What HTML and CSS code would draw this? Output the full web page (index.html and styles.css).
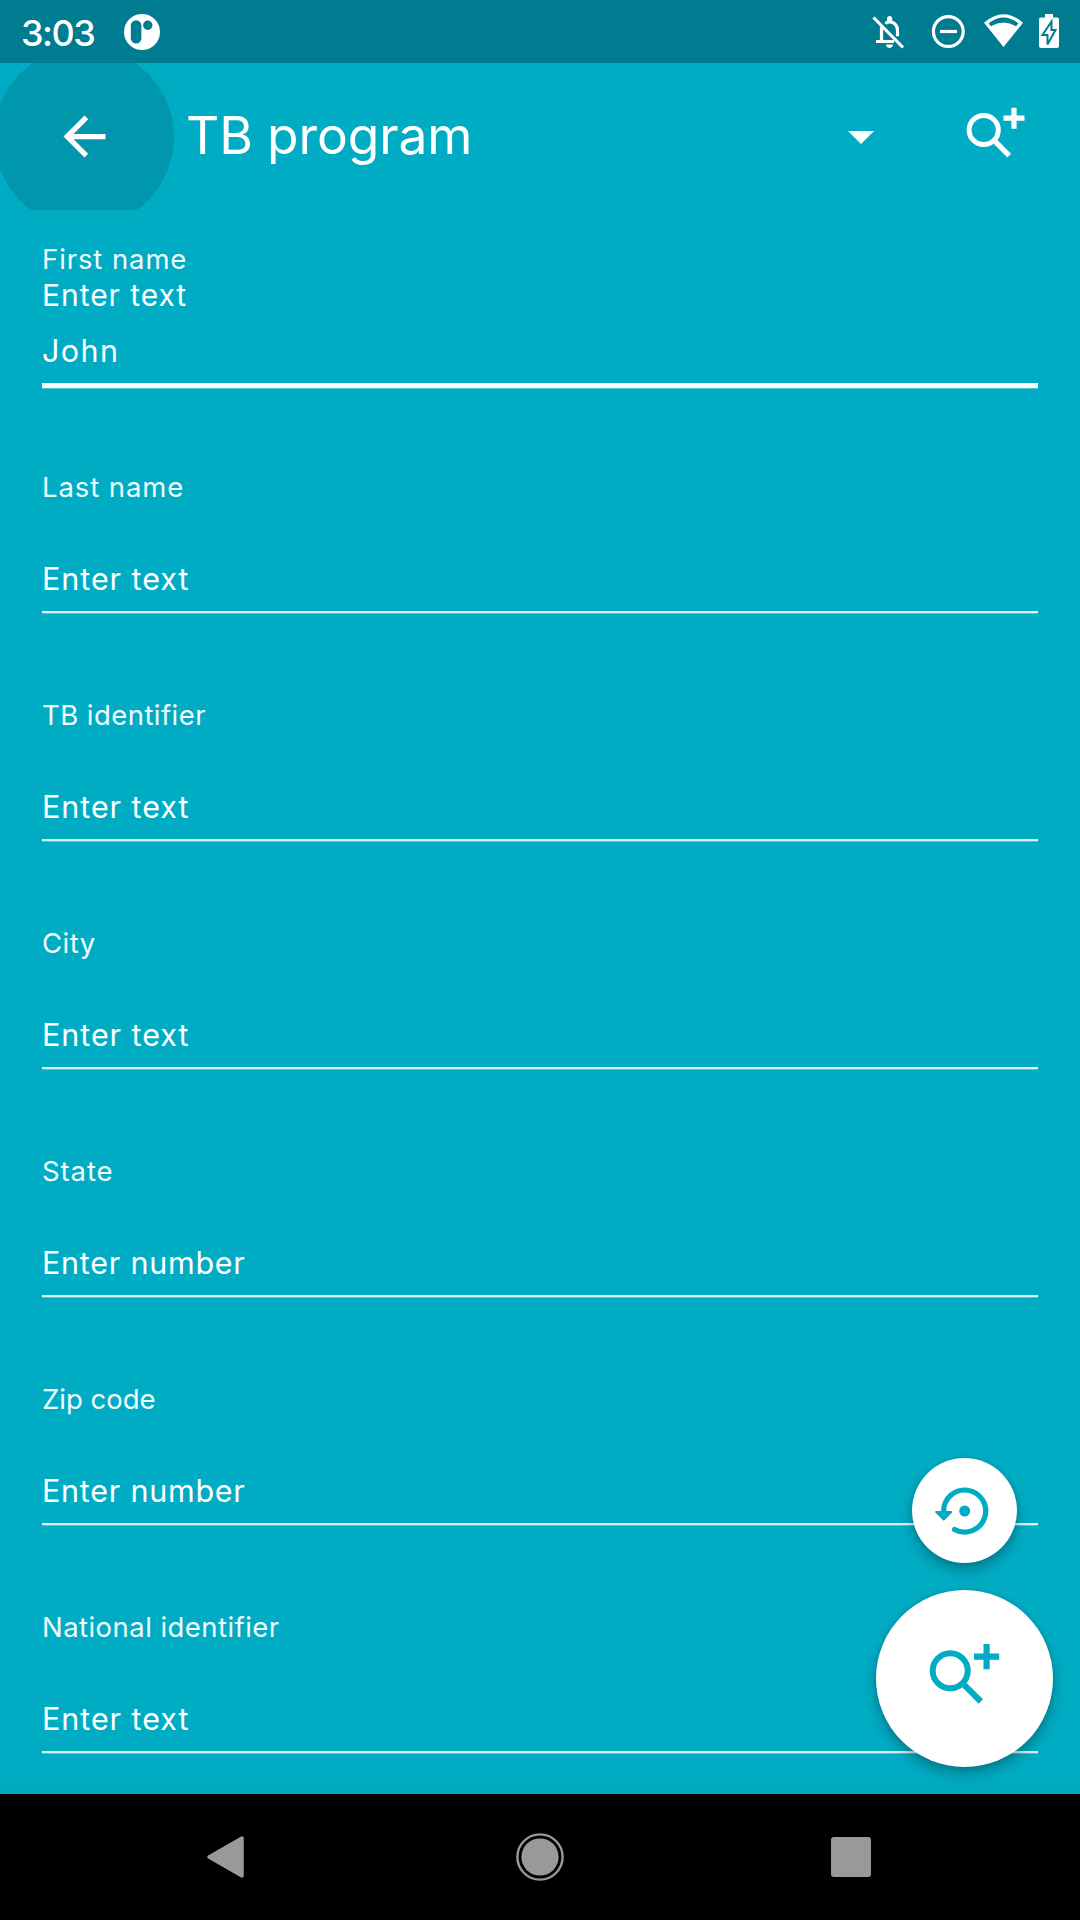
FILE: index.html
```html
<!DOCTYPE html>
<html lang="en">
<head>
<meta charset="utf-8">
<title>TB program</title>
<link rel="stylesheet" href="styles.css">
</head>
<body>
<svg class="defs" width="0" height="0" aria-hidden="true">
  <symbol id="search-plus" viewBox="0 0 60 52">
    <circle cx="17.7" cy="24" r="14.6" fill="none" stroke="currentColor" stroke-width="5"/>
    <path d="M29.3 35.7 43.2 49.6" stroke="currentColor" stroke-width="5.2"/>
    <path d="M37.5 12.2h21M48 1.7v21" stroke="currentColor" stroke-width="5.2"/>
  </symbol>
</svg>
<div class="screen">
  <header class="status">
    <span class="clock">3:03</span>
    <svg class="app-logo" width="38" height="38" viewBox="0 0 38 38">
      <circle cx="19" cy="19" r="18" fill="#fff"/>
      <rect x="7.8" y="7.3" width="10.6" height="23.2" rx="5.3" fill="#007c91"/>
      <circle cx="24.8" cy="12.3" r="4.7" fill="#007c91"/>
    </svg>
    <svg class="status-icons" width="190" height="40" viewBox="870 12 190 40">
      <g fill="none" stroke="#fff" stroke-width="3.2">
        <path d="M873.5 17.5 903 47.5M881.5 27v14M876 41.5h18M885.5 23.8c1-1.2 2.5-1.9 4-1.9 4.800 0 8 3.800 8 8.800v5.500"/>
        <circle cx="948.3" cy="31.5" r="14.9"/>
        <path d="M940 31.5h17"/>
      </g>
      <g fill="#fff">
        <path d="M887 22v-3.300a2.600 2.600 0 0 1 5.200 0V22zM886 44.500h7c0 4.600-7 4.600-7 0z"/>
        <path fill-rule="evenodd" d="M984 22.800q19.500-17 39 0L1003.500 47zM988.700 23.300l2.200 2.900q12.600-7.400 25.200 0l2.200-2.900q-14.800-11.500-29.600 0z"/>
        <path d="M1045 14h8v3.500h4a2 2 0 0 1 2 2V46a2 2 0 0 1-2 2h-16a2 2 0 0 1-2-2V19.500a2 2 0 0 1 2-2h4z"/>
      </g>
      <path d="M1051.500 21.500v8.500h4l-8 14.500v-9.500h-5z" fill="#fff" stroke="#007c91" stroke-width="2"/>
    </svg>
  </header>

  <div class="appbar">
    <button class="back" aria-label="Back">
      <svg width="63" height="63" viewBox="0 0 24 24"><path fill="#fff" d="M20 11H7.830l5.590-5.590L12 4l-8 8 8 8 1.410-1.410L7.830 13H20z"/></svg>
    </button>
    <h1 class="title">TB program</h1>
    <svg class="caret" width="26" height="13" viewBox="0 0 26 13"><path fill="#fff" d="M0 0h26L13 13z"/></svg>
    <svg class="search" width="60" height="52"><use href="#search-plus"/></svg>
  </div>

  <main class="form">
    <div class="field active"><span class="label wide">First name</span><span class="hint">Enter text</span><span class="value wide">John</span></div>
    <div class="field"><span class="label wide">Last name</span><span class="value">Enter text</span></div>
    <div class="field"><span class="label">TB identifier</span><span class="value">Enter text</span></div>
    <div class="field"><span class="label">City</span><span class="value">Enter text</span></div>
    <div class="field"><span class="label wide">State</span><span class="value numeric">Enter number</span></div>
    <div class="field"><span class="label tight">Zip code</span><span class="value numeric">Enter number</span></div>
    <div class="field"><span class="label">National identifier</span><span class="value">Enter text</span></div>
  </main>

  <div class="fabs">
    <button class="fab small" aria-label="Reset">
      <svg width="60" height="54" viewBox="-29.700 -27 60 54">
        <path d="M-21 1A21 21 0 1 1-10.200 18.400" fill="none" stroke="#00acc4" stroke-width="5.200" stroke-linecap="round"/>
        <path d="M-28.500 1h15l-7.500 7.500z" fill="#00acc4" stroke="#00acc4" stroke-width="2" stroke-linejoin="round"/>
        <circle r="5.500" fill="#00acc4"/>
      </svg>
    </button>
    <button class="fab large" aria-label="Search"><svg width="72" height="62.4"><use href="#search-plus"/></svg></button>
  </div>

  <nav class="navbar">
    <svg width="43" height="44" viewBox="0 0 43 44"><path d="M3 22 36 3v38z" fill="#999" stroke="#999" stroke-width="3.500" stroke-linejoin="round"/></svg>
    <svg width="48" height="48" viewBox="0 0 48 48"><circle cx="24" cy="24" r="22.600" fill="none" stroke="#999" stroke-width="2.400"/><circle cx="24" cy="24" r="18.600" fill="#999"/></svg>
    <svg width="40" height="40" viewBox="0 0 40 40"><rect width="40" height="40" rx="3" fill="#999"/></svg>
  </nav>
</div>
</body>
</html>
```
FILE: styles.css
```css
* { box-sizing: border-box; }

body {
  margin: 0;
  background: #00acc4;
  color: #fff;
  font-family: Inter, Roboto, sans-serif;
}

button {
  border: 0;
  padding: 0;
  background: none;
}

svg { display: block; flex: none; }
.defs { position: absolute; }

.screen {
  position: relative;
  width: 1080px;
  height: 1920px;
  overflow: hidden;
  display: flex;
  flex-direction: column;
}

.status {
  flex: none;
  height: 63px;
  background: #007c91;
  display: flex;
  align-items: flex-start;
  padding: 12px 20px 0 21px;
}
.clock {
  width: 102px;
  font-size: 36px;
  line-height: 43px;
  font-weight: 500;
  letter-spacing: -1.5px;
}
.app-logo { margin-top: 1px; }
.status-icons { margin-left: auto; }

.appbar {
  flex: none;
  height: 147px;
  display: flex;
  align-items: center;
  padding-right: 54px;
  overflow: hidden;
}
.back {
  flex: none;
  width: 180px;
  height: 180px;
  margin-left: -6px;
  border-radius: 50%;
  background: #0097ac;
  display: grid;
  place-items: center;
}
.title {
  flex: 1;
  margin: 0 0 3px 12px;
  font-size: 51.5px;
  line-height: 64px;
  font-weight: 400;
  letter-spacing: -0.1px;
}
.caret { margin: 2px 92px 0 0; }
.search { margin-bottom: 9px; }

.form {
  flex: 1;
  min-height: 0;
  overflow: hidden;
  padding: 31px 42px 0;
  background: linear-gradient(transparent calc(100% - 16px), #00a8be);
}
.field {
  height: 228px;
  display: grid;
  grid-template-rows: 36px 36px 70px auto;
}
.label {
  font-size: 27.5px;
  line-height: 36px;
  letter-spacing: 0.45px;
  color: #effcfd;
}
.label.wide { letter-spacing: 0.9px; }
.label.tight { letter-spacing: 0; }
.hint {
  font-size: 30px;
  line-height: 36px;
  letter-spacing: 0.95px;
}
.value {
  grid-row: 3;
  padding-top: 20px;
  font-size: 30.5px;
  line-height: 36px;
  letter-spacing: 0.95px;
}
.value.numeric { letter-spacing: 0.75px; }
.value.wide { letter-spacing: 1.4px; }
.field::after {
  content: "";
  grid-row: 4;
  height: 2px;
  background: #dcf6f9;
  box-shadow: 0 1px 0 rgba(255, 255, 255, 0.3);
}
.active::after { height: 5px; background: #fff; }

.fabs {
  position: absolute;
  right: 27px;
  bottom: 153px;
  display: flex;
  flex-direction: column;
  align-items: center;
  gap: 27px;
}
.fab {
  border-radius: 50%;
  background: #fff;
  color: #00acc4;
  display: grid;
  place-items: center;
  box-shadow: 0 7px 14px rgba(0, 0, 0, 0.26), 0 1px 6px rgba(0, 0, 0, 0.1);
}
.small { width: 105px; height: 105px; }
.large {
  width: 177px;
  height: 177px;
  padding-bottom: 11px;
}

.navbar {
  flex: none;
  height: 126px;
  background: #000;
  display: flex;
  align-items: center;
  justify-content: space-between;
  padding: 0 209px 0 206px;
}
```
